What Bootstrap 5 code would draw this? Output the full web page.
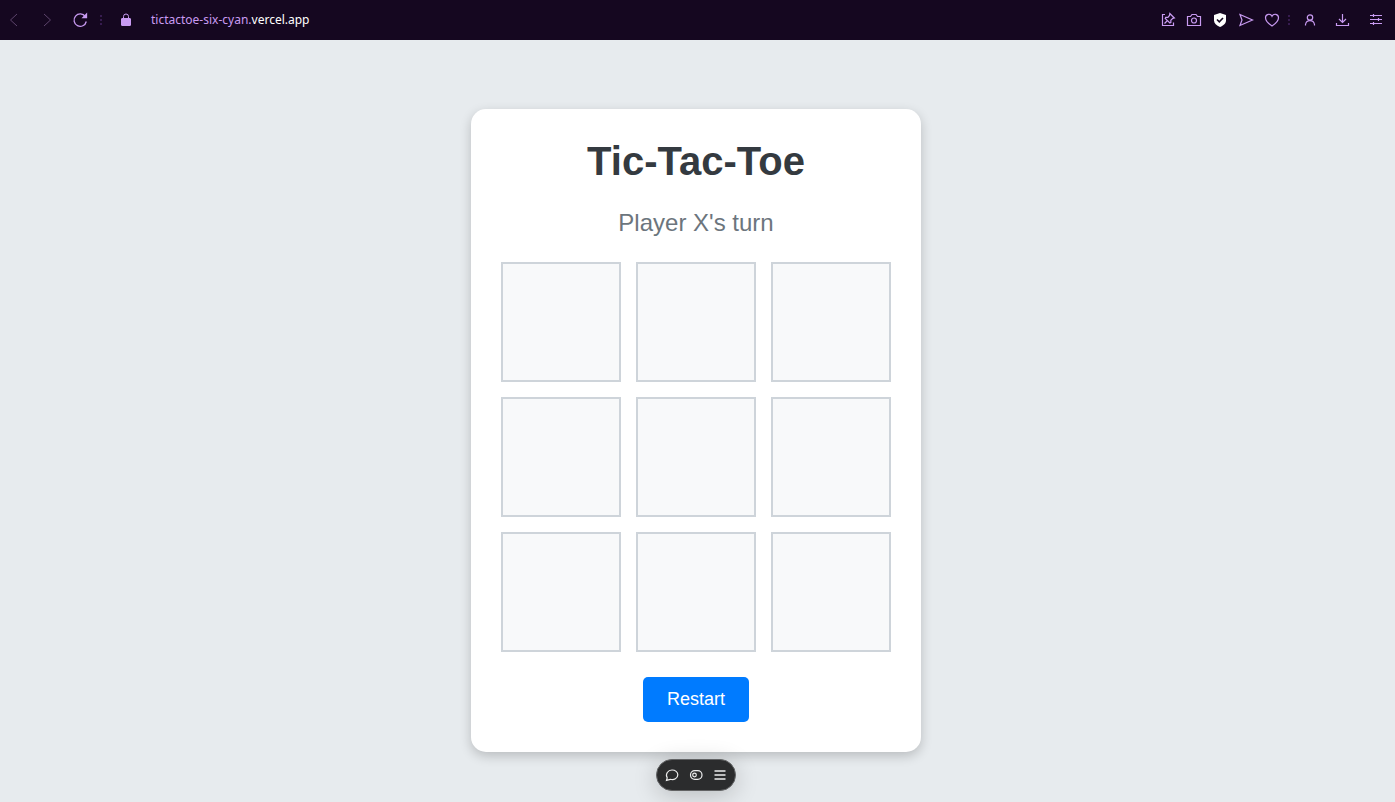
<!DOCTYPE html>
<html lang="en">
<head>
<meta charset="utf-8">
<meta name="viewport" content="width=device-width, initial-scale=1">
<title>Tic-Tac-Toe</title>
<link href="https://cdn.jsdelivr.net/npm/bootstrap@5.3.0/dist/css/bootstrap.min.css" rel="stylesheet">
<style>
  body { background: #e7ebee; font-family: "Liberation Sans", Arial, sans-serif; }
  .browser-bar { height: 40px; padding: 0 11px 0 6px; background: #150720; color: #c99bf2; }
  .tool { display: flex; padding: 0; border: 0; background: none; color: inherit; }
  .tool svg { display: block; width: 16px; height: 16px; fill: none; stroke: currentColor; }
  .tool:disabled { color: #5d446c; }
  .nav-tools { gap: 17px; margin-right: 12px; }
  .page-tools { gap: 10px; }
  .profile-tools { gap: 17px; }
  .sep { width: 2px; height: 10px; background: repeating-linear-gradient(#371c50 0 2px, transparent 2px 4px); }
  .address { gap: 17px; }
  .address a { color: #c99bf2; font: 12px/20px "Noto Sans", "Open Sans", sans-serif; }
  .address b { color: #fff; font-weight: 400; }
  .stage { padding: 69px 3px 50px 0; }
  .game { width: 450px; padding: 30px; border-radius: 15px; background: #fff; box-shadow: 0 4px 12px rgba(0,0,0,.2); }
  .game h1 { margin: 0 0 24px; font-size: 40px; line-height: 45px; font-weight: 700; color: #343a40; }
  .turn { margin: 0 0 25px; font-size: 24px; line-height: 29px; color: #6c757d; }
  .board { grid-template-columns: repeat(3, 1fr); gap: 15px; }
  .cell { aspect-ratio: 1; padding: 0; border: 2px solid #ced4da; background: #f8f9fa; }
  .restart { margin-top: 25px; padding: 12px 24px; border: 0; border-radius: 5px; background: #007bff; color: #fff; font-size: 18px; line-height: 21px; }
  .toolbar-pill { bottom: 11px; left: calc(50% - 2px); height: 32px; padding: 0 7px; gap: 8px; border-radius: 16px; background: #2b2c2d; color: #ededed; border: 1px solid #626364; box-shadow: 0 4px 24px rgba(0,0,0,.2); }
</style>
<script src="https://cdn.jsdelivr.net/npm/bootstrap@5.3.0/dist/js/bootstrap.bundle.min.js"></script>
</head>
<body>
<header class="browser-bar d-flex align-items-center">
  <div class="nav-tools d-flex">
    <button class="tool" aria-label="Back" disabled><svg viewBox="0 0 16 16"><path d="M11 2 4.500 8 11 14"/></svg></button>
    <button class="tool" aria-label="Forward" disabled><svg viewBox="0 0 16 16"><path d="m5 2 6.500 6L5 14"/></svg></button>
    <button class="tool" aria-label="Reload"><svg viewBox="0 0 16 16" stroke-width="1.300"><path d="M13.300 4.500A6.200 6.200 0 1 0 14.300 9.500"/><path d="M14.500 2v3.500H11z" fill="currentColor"/></svg></button>
  </div>
  <span class="sep"></span>
  <div class="address d-flex align-items-center ps-3">
    <button class="tool" aria-label="Site security"><svg viewBox="0 0 16 16"><path d="M5.500 7V4.500a2.500 2.500 0 0 1 5 0V7"/><rect x="3.500" y="6.500" width="9" height="7" rx=".5" fill="currentColor"/></svg></button>
    <a href="#" class="text-decoration-none">tictactoe-six-cyan.<b>vercel.app</b></a>
  </div>
  <div class="page-tools d-flex align-items-center ms-auto">
    <button class="tool" aria-label="Pin page"><svg viewBox="0 0 16 16" stroke-width="1.200"><path d="M5 2.500H2.500v11h11V10.500"/><path d="m9.800 1.500 4.500 4.500-1.500.3-2 2 .1 2.200-1 .5-4.700-4.700.5-1 2.200.1 1.600-1.900zM7.500 8.500l-3 3"/></svg></button>
    <button class="tool" aria-label="Snapshot"><svg viewBox="0 0 16 16" stroke-width="1.200"><path d="M1.500 4.500h3l1.500-2h4l1.500 2h3v9h-13z"/><circle cx="8" cy="8.500" r="2.500"/></svg></button>
    <button class="tool" aria-label="Ad blocker"><svg viewBox="0 0 16 16"><path d="m8 1 6 2v5.500c0 3-2.500 5-6 6.500-3.500-1.500-6-3.500-6-6.500V3z" fill="#fff" stroke="none"/><path d="m5 7.500 2.300 2.300L11 6" stroke="#150720" stroke-width="1.600"/></svg></button>
    <button class="tool" aria-label="Send page"><svg viewBox="0 0 16 16" stroke-width="1.200"><path d="m2 2.500 12.500 5.500L2 13.500 4 8z"/></svg></button>
    <button class="tool" aria-label="Bookmark"><svg viewBox="0 0 16 16" stroke-width="1.200"><path d="M8 14C5 12 1.500 9 1.500 5.700c0-4 5-4.500 6.500-1.400 1.500-3.100 6.500-2.600 6.500 1.400C14.500 9 11 12 8 14z"/></svg></button>
  </div>
  <span class="sep mx-2"></span>
  <div class="profile-tools d-flex ms-1">
    <button class="tool" aria-label="Profile"><svg viewBox="0 0 16 16" stroke-width="1.200"><circle cx="8" cy="5.500" r="2.700"/><path d="M3.500 13.500v-1C4 10 5.500 8.700 8 8.700s4 1.300 4.500 3.800v1"/></svg></button>
    <button class="tool" aria-label="Downloads"><svg viewBox="0 0 16 16" stroke-width="1.200"><path d="M7.500 2v8.500M4 7l3.500 3.500L11 7M1.500 11v2.500h12V11"/></svg></button>
    <button class="tool" aria-label="Easy setup"><svg viewBox="0 0 16 16" stroke-width="1.200"><path d="M2 3.500h12M2 7.500h12M2 11.500h12M5.500 2v3M10.500 6v3M5.500 10v3"/></svg></button>
  </div>
</header>

<main class="stage d-flex justify-content-center">
  <section class="game text-center">
    <h1>Tic-Tac-Toe</h1>
    <p class="turn">Player X's turn</p>
    <div class="board d-grid">
      <button class="cell" aria-label="Row 1, column 1"></button>
      <button class="cell" aria-label="Row 1, column 2"></button>
      <button class="cell" aria-label="Row 1, column 3"></button>
      <button class="cell" aria-label="Row 2, column 1"></button>
      <button class="cell" aria-label="Row 2, column 2"></button>
      <button class="cell" aria-label="Row 2, column 3"></button>
      <button class="cell" aria-label="Row 3, column 1"></button>
      <button class="cell" aria-label="Row 3, column 2"></button>
      <button class="cell" aria-label="Row 3, column 3"></button>
    </div>
    <button class="restart">Restart</button>
  </section>
</main>

<div class="toolbar-pill position-fixed translate-middle-x d-flex align-items-center">
  <button class="tool" aria-label="Comment"><svg viewBox="0 0 16 16" stroke-width="1.200"><path d="M2.500 13.300 3.200 10.800C1 7 4 3 8 3c3.300 0 5.800 2 5.800 4.800 0 3.500-3.800 5.700-7.500 4.500z"/></svg></button>
  <button class="tool" aria-label="Feature flags"><svg viewBox="0 0 16 16" stroke-width="1.200"><rect x="2.500" y="3.700" width="11.500" height="8.600" rx="4.300"/><circle cx="6.500" cy="8" r="1.800"/></svg></button>
  <button class="tool" aria-label="Menu"><svg viewBox="0 0 16 16" stroke-width="1.400"><path d="M2.500 4h11M2.500 8h11M2.500 12h11"/></svg></button>
</div>
</body>
</html>
